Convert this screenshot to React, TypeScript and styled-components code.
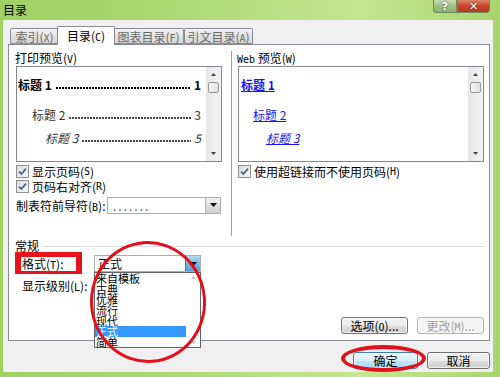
import React from 'react';
import styled, { createGlobalStyle } from 'styled-components';

const GlobalStyle = createGlobalStyle`
  html, body {
    margin: 0;
    padding: 0;
  }
  body {
    font-family: "Noto Sans CJK SC", "DejaVu Sans", sans-serif;
    font-size: 12px;
    color: #000;
  }
`;

const Frame = styled.div`
  position: relative;
  width: 500px;
  height: 377px;
  display: flex;
  flex-direction: column;
  overflow: hidden;
  background: linear-gradient(to right, #9fd163 0%, #b0da78 40%, #c6e691 72%, #a9d56e 100%);
`;

const TitleBar = styled.div`
  height: 20px;
  flex-shrink: 0;
  display: flex;
  justify-content: space-between;
  align-items: flex-start;
  padding: 0 10px 0 3px;
`;

const Title = styled.div`
  font-size: 12px;
  line-height: 20px;
  color: #000;
`;

const Caption = styled.div`
  display: flex;
`;

const CaptionButton = styled.div<{ $close?: boolean }>`
  width: ${p => (p.$close ? '33px' : '24px')};
  height: 13px;
  box-sizing: border-box;
  border: 1px solid #6d8a5a;
  border-top: none;
  border-radius: ${p => (p.$close ? '0 0 4px 0' : '0 0 0 4px')};
  display: flex;
  align-items: center;
  justify-content: center;
  font-family: "DejaVu Sans", sans-serif;
  font-weight: bold;
  font-size: 11px;
  line-height: 11px;
  color: #fff;
  text-shadow: 0 0 2px #333;
  background: ${p =>
    p.$close
      ? 'linear-gradient(to bottom, #e0866e, #c7452b 50%, #b83a22)'
      : 'linear-gradient(to bottom, #c7dcb0, #9ebf86 50%, #8fb176)'};
`;

const Client = styled.div`
  flex: 1;
  margin: 0 7px 5px 3px;
  background: #f0f0f0;
  display: flex;
  flex-direction: column;
  padding: 6px 3px 0 5px;
`;

const TabRow = styled.div`
  height: 18px;
  display: flex;
  align-items: flex-end;
  padding-left: 2px;
  position: relative;
  z-index: 1;
`;

const Tab = styled.div<{ $active?: boolean; $w: number }>`
  width: ${p => p.$w}px;
  height: ${p => (p.$active ? '19px' : '16px')};
  box-sizing: border-box;
  border: 1px solid #898c95;
  border-bottom: ${p => (p.$active ? 'none' : '1px solid #898c95')};
  border-radius: 2px 2px 0 0;
  margin: ${p => (p.$active ? '0 -2px -1px -2px' : '0')};
  background: ${p => (p.$active ? '#fff' : 'linear-gradient(to bottom, #f2f2f2, #e2e2e2 50%, #d6d6d6)')};
  color: ${p => (p.$active ? '#000' : '#6a6a6a')};
  font-size: 12px;
  line-height: ${p => (p.$active ? '17px' : '15px')};
  text-align: center;
  position: relative;
  z-index: ${p => (p.$active ? 2 : 0)};
`;

const Panel = styled.div`
  height: 297px;
  box-sizing: border-box;
  border: 1px solid #898c95;
  background: #fff;
  display: flex;
  flex-direction: column;
`;

const Columns = styled.div`
  display: flex;
  margin-top: 6px;
  height: 185px;
`;

const Column = styled.div<{ $left?: boolean }>`
  box-sizing: border-box;
  width: ${p => (p.$left ? '223px' : 'auto')};
  flex: ${p => (p.$left ? '0 0 auto' : '1')};
  border-right: ${p => (p.$left ? '1px solid #a0a0a0' : 'none')};
  padding: ${p => (p.$left ? '0 9px 0 7px' : '0 5px 0 6px')};
  display: flex;
  flex-direction: column;
`;

const Label = styled.div`
  line-height: 13px;
  height: 13px;
  margin-left: -1px;
  white-space: nowrap;
`;

const Mono = styled.span`
  font-family: "DejaVu Sans Mono", monospace;
  font-size: 10px;
`;

const PreviewBox = styled.div`
  margin-top: 2px;
  height: 96px;
  box-sizing: border-box;
  border: 1px solid #828790;
  display: flex;
  background: #fff;
`;

const PreviewBody = styled.div`
  flex: 1;
  min-width: 0;
  padding: 11px 5px 0 1px;
  display: flex;
  flex-direction: column;
  overflow: hidden;
`;

const TocRow = styled.div<{ $level: number }>`
  display: flex;
  align-items: center;
  line-height: 14px;
  height: 14px;
  white-space: nowrap;
  padding-left: ${p => [0, 14, 27][p.$level]}px;
  margin-top: ${p => [0, 16, 9][p.$level]}px;
  font-weight: ${p => (p.$level === 0 ? 'bold' : 'normal')};
  font-style: ${p => (p.$level === 2 ? 'italic' : 'normal')};
  color: ${p => (p.$level === 0 ? '#000' : '#333')};
`;

const Leader = styled.span<{ $bold?: boolean }>`
  flex: 1;
  align-self: flex-end;
  height: 4px;
  margin: 0 3px 2px 4px;
  background-image: radial-gradient(
    circle at 1px 2px,
    ${p => (p.$bold ? '#000' : '#444')} ${p => (p.$bold ? '0.9px' : '0.7px')},
    transparent 1.2px
  );
  background-size: 3px 4px;
  background-repeat: repeat-x;
`;

const WebLink = styled.a<{ $level: number }>`
  display: block;
  align-self: flex-start;
  line-height: 14px;
  height: 14px;
  color: #1414ff;
  text-decoration: underline;
  margin-left: ${p => [1, 13, 26][p.$level]}px;
  margin-top: ${p => [0, 16, 9][p.$level]}px;
  font-weight: ${p => (p.$level === 0 ? 'bold' : 'normal')};
  font-style: ${p => (p.$level === 2 ? 'italic' : 'normal')};
  white-space: nowrap;
`;

const ScrollTrack = styled.div`
  width: 15px;
  flex-shrink: 0;
  background: linear-gradient(to right, #e6e6e6, #f4f4f4);
  display: flex;
  flex-direction: column;
  align-items: center;
`;

const ArrowBox = styled.div`
  height: 15px;
  width: 15px;
  display: flex;
  align-items: center;
  justify-content: center;
`;

const Thumb = styled.div`
  width: 11px;
  height: 11px;
  box-sizing: border-box;
  border: 1px solid #979797;
  border-radius: 2px;
  background: linear-gradient(to right, #f3f3f3, #e2e2e2);
`;

const Spacer = styled.div`
  flex: 1;
`;

const CheckRow = styled.div<{ $mt: number }>`
  display: flex;
  align-items: center;
  height: 15px;
  margin-top: ${p => p.$mt}px;
  white-space: nowrap;
`;

const CheckBox = styled.span`
  width: 13px;
  height: 13px;
  box-sizing: border-box;
  border: 1px solid #8e8f8f;
  background: linear-gradient(135deg, #d8d8d8, #fafafa);
  display: inline-flex;
  align-items: center;
  justify-content: center;
  margin-right: 3px;
  flex-shrink: 0;
`;

const LeaderRow = styled.div`
  display: flex;
  align-items: center;
  margin-top: 3px;
  height: 16px;
  white-space: nowrap;
`;

const LeaderLabel = styled.span`
  width: 91px;
  flex-shrink: 0;
`;

const Combo = styled.div<{ $w: number }>`
  position: relative;
  width: ${p => p.$w}px;
  height: 17px;
  box-sizing: border-box;
  border: 1px solid #abadb3;
  background: #fff;
  display: flex;
  align-items: center;
  flex-shrink: 0;
`;

const ComboText = styled.span<{ $spaced?: boolean }>`
  flex: 1;
  padding-left: ${p => (p.$spaced ? '5px' : '3px')};
  line-height: 15px;
  letter-spacing: ${p => (p.$spaced ? '2px' : '0')};
  color: ${p => (p.$spaced ? '#555' : '#000')};
  overflow: hidden;
`;

const ComboButton = styled.div<{ $hot?: boolean }>`
  width: 15px;
  height: 15px;
  box-sizing: border-box;
  border-left: 1px solid ${p => (p.$hot ? '#3c7fb1' : '#b0b0b0')};
  background: ${p =>
    p.$hot
      ? 'linear-gradient(to bottom, #b6dcf5, #7db7e2 50%, #5a9fd4)'
      : 'linear-gradient(to bottom, #f2f2f2, #e0e0e0 50%, #cfcfcf)'};
  display: flex;
  align-items: center;
  justify-content: center;
`;

const Group = styled.div`
  display: flex;
  flex-direction: column;
  padding: 0 4px 0 6px;
  flex: 1;
`;

const GroupHead = styled.div`
  display: flex;
  align-items: center;
  height: 14px;
  margin-top: 2px;
  gap: 3px;
`;

const GroupLine = styled.div`
  flex: 1;
  height: 1px;
  background: #dcdcdc;
  margin-top: 2px;
`;

const FieldRow = styled.div<{ $mt: number }>`
  display: flex;
  align-items: center;
  height: 17px;
  margin-top: ${p => p.$mt}px;
  white-space: nowrap;
`;

const FieldLabel = styled.span`
  width: 79px;
  padding-left: 7px;
  box-sizing: border-box;
  flex-shrink: 0;
`;

const ButtonRow = styled.div`
  display: flex;
  justify-content: flex-end;
  gap: 9px;
  padding: 0 1px 6px 0;
  margin-top: auto;
`;

const Button = styled.div<{ $w: number; $disabled?: boolean; $default?: boolean }>`
  width: ${p => p.$w}px;
  height: 17px;
  box-sizing: border-box;
  border: 1px solid ${p => (p.$disabled ? '#adb2b5' : p.$default ? '#3c7fb1' : '#707070')};
  border-radius: 3px;
  background: ${p =>
    p.$disabled
      ? '#f4f4f4'
      : p.$default
      ? 'linear-gradient(to bottom, #eaf6fd, #d9f0fc 50%, #bee6fd 51%, #a7d9f5)'
      : 'linear-gradient(to bottom, #f2f2f2, #ebebeb 50%, #dddddd 51%, #cfcfcf)'};
  box-shadow: inset 0 0 0 1px rgba(255, 255, 255, 0.7);
  color: ${p => (p.$disabled ? '#a0a0a0' : '#000')};
  font-size: 12px;
  line-height: 15px;
  text-align: center;
  white-space: nowrap;
`;

const Footer = styled.div`
  height: 31px;
  display: flex;
  justify-content: flex-end;
  align-items: flex-start;
  padding-top: 11px;
  box-sizing: border-box;
  gap: 9px;
`;

const DropList = styled.div`
  position: absolute;
  left: -1px;
  top: 16px;
  width: 107px;
  height: 76px;
  box-sizing: border-box;
  border: 1px solid #646464;
  background: #fff;
  display: flex;
  z-index: 5;
`;

const DropItems = styled.div`
  flex: 1;
  display: flex;
  flex-direction: column;
`;

const DropItem = styled.div<{ $selected?: boolean }>`
  height: 10.7px;
  line-height: 10.7px;
  font-size: 11px;
  padding-left: 1px;
  background: ${p => (p.$selected ? '#3399ff' : 'transparent')};
  color: ${p => (p.$selected ? '#fff' : '#000')};
  white-space: nowrap;
`;

const DropScroll = styled.div`
  width: 14px;
  display: flex;
  flex-direction: column;
  justify-content: space-between;
  align-items: center;
  padding: 3px 0;
`;

const RedBox = styled.div`
  position: absolute;
  left: 15px;
  top: 252px;
  width: 67px;
  height: 22px;
  box-sizing: border-box;
  border-style: solid;
  border-color: #e8121c;
  border-width: 5px 6px 3px 6px;
  z-index: 10;
  pointer-events: none;
`;

const RedEllipse = styled.div<{ $x: number; $y: number; $w: number; $h: number; $t: number; $rot?: number }>`
  position: absolute;
  left: ${p => p.$x}px;
  top: ${p => p.$y}px;
  width: ${p => p.$w}px;
  height: ${p => p.$h}px;
  box-sizing: border-box;
  border: ${p => p.$t}px solid #e3101c;
  border-radius: 50%;
  transform: rotate(${p => p.$rot ?? 0}deg);
  z-index: 10;
  pointer-events: none;
`;

const Check = () => (
  <svg width="9" height="9" viewBox="0 0 9 9">
    <path d="M1 4.6 L3.4 7 L8 1.6" fill="none" stroke="#4a6396" strokeWidth="1.8" />
  </svg>
);

const DownArrow = ({ color = '#000' }: { color?: string }) => (
  <svg width="7" height="4" viewBox="0 0 7 4">
    <path d="M0 0 H7 L3.5 4 Z" fill={color} />
  </svg>
);

const SmallArrow = ({ up, color = '#444' }: { up?: boolean; color?: string }) => (
  <svg width="5" height="3" viewBox="0 0 5 3">
    <path d={up ? 'M0 3 H5 L2.5 0 Z' : 'M0 0 H5 L2.5 3 Z'} fill={color} />
  </svg>
);

const Scrollbar = () => (
  <ScrollTrack>
    <ArrowBox>
      <SmallArrow up />
    </ArrowBox>
    <Thumb />
    <Spacer />
    <ArrowBox>
      <SmallArrow />
    </ArrowBox>
  </ScrollTrack>
);

const tocItems = [
  { text: '标题 1', page: '1' },
  { text: '标题 2', page: '3' },
  { text: '标题 3', page: '5' },
];

const styles = ['来自模板', '古典', '优雅', '流行', '现代', '正式', '简单'];

const App: React.FC = () => {
  return (
    <>
      <GlobalStyle />
      <Frame>
        <TitleBar>
          <Title>目录</Title>
          <Caption>
            <CaptionButton>?</CaptionButton>
            <CaptionButton $close>✕</CaptionButton>
          </Caption>
        </TitleBar>

        <Client>
          <TabRow>
            <Tab $w={49}>索引(<Mono>X</Mono>)</Tab>
            <Tab $w={58} $active>目录(<Mono>C</Mono>)</Tab>
            <Tab $w={71}>图表目录(<Mono>F</Mono>)</Tab>
            <Tab $w={69}>引文目录(<Mono>A</Mono>)</Tab>
          </TabRow>

          <Panel>
            <Columns>
              <Column $left>
                <Label>打印预览(<Mono>V</Mono>)</Label>
                <PreviewBox>
                  <PreviewBody>
                    {tocItems.map((t, i) => (
                      <TocRow key={t.text} $level={i}>
                        <span>{t.text}</span>
                        <Leader $bold={i === 0} />
                        <span>{t.page}</span>
                      </TocRow>
                    ))}
                  </PreviewBody>
                  <Scrollbar />
                </PreviewBox>
                <CheckRow $mt={2}>
                  <CheckBox>
                    <Check />
                  </CheckBox>
                  显示页码(<Mono>S</Mono>)
                </CheckRow>
                <CheckRow $mt={0}>
                  <CheckBox>
                    <Check />
                  </CheckBox>
                  页码右对齐(<Mono>R</Mono>)
                </CheckRow>
                <LeaderRow>
                  <LeaderLabel>制表符前导符(<Mono>B</Mono>):</LeaderLabel>
                  <Combo $w={114}>
                    <ComboText $spaced>.......</ComboText>
                    <ComboButton>
                      <DownArrow />
                    </ComboButton>
                  </Combo>
                </LeaderRow>
              </Column>

              <Column>
                <Label>
                  <Mono>Web</Mono> 预览(<Mono>W</Mono>)
                </Label>
                <PreviewBox>
                  <PreviewBody>
                    {tocItems.map((t, i) => (
                      <WebLink key={t.text} $level={i}>
                        {t.text}
                      </WebLink>
                    ))}
                  </PreviewBody>
                  <Scrollbar />
                </PreviewBox>
                <CheckRow $mt={2}>
                  <CheckBox>
                    <Check />
                  </CheckBox>
                  使用超链接而不使用页码(<Mono>H</Mono>)
                </CheckRow>
              </Column>
            </Columns>

            <Group>
              <GroupHead>
                <span>常规</span>
                <GroupLine />
              </GroupHead>
              <FieldRow $mt={3}>
                <FieldLabel>格式(<Mono>T</Mono>):</FieldLabel>
                <Combo $w={107}>
                  <ComboText>正式</ComboText>
                  <ComboButton $hot>
                    <DownArrow color="#111" />
                  </ComboButton>
                  <DropList>
                    <DropItems>
                      {styles.map(s => (
                        <DropItem key={s} $selected={s === '正式'}>
                          {s}
                        </DropItem>
                      ))}
                    </DropItems>
                    <DropScroll>
                      <SmallArrow up color="#c8c8c8" />
                      <SmallArrow color="#c8c8c8" />
                    </DropScroll>
                  </DropList>
                </Combo>
              </FieldRow>
              <FieldRow $mt={5}>
                <FieldLabel>显示级别(<Mono>L</Mono>):</FieldLabel>
              </FieldRow>
              <ButtonRow>
                <Button $w={67}>选项(<Mono>O</Mono>)...</Button>
                <Button $w={67} $disabled>
                  更改(<Mono>M</Mono>)...
                </Button>
              </ButtonRow>
            </Group>
          </Panel>

          <Footer>
            <Button $w={65} $default>
              确定
            </Button>
            <Button $w={63}>取消</Button>
          </Footer>
        </Client>

        <RedBox />
        <RedEllipse $x={90} $y={241} $w={116} $h={122} $t={3} $rot={-4} />
        <RedEllipse $x={341} $y={345} $w={85} $h={27} $t={4} />
      </Frame>
    </>
  );
};

export default App;
